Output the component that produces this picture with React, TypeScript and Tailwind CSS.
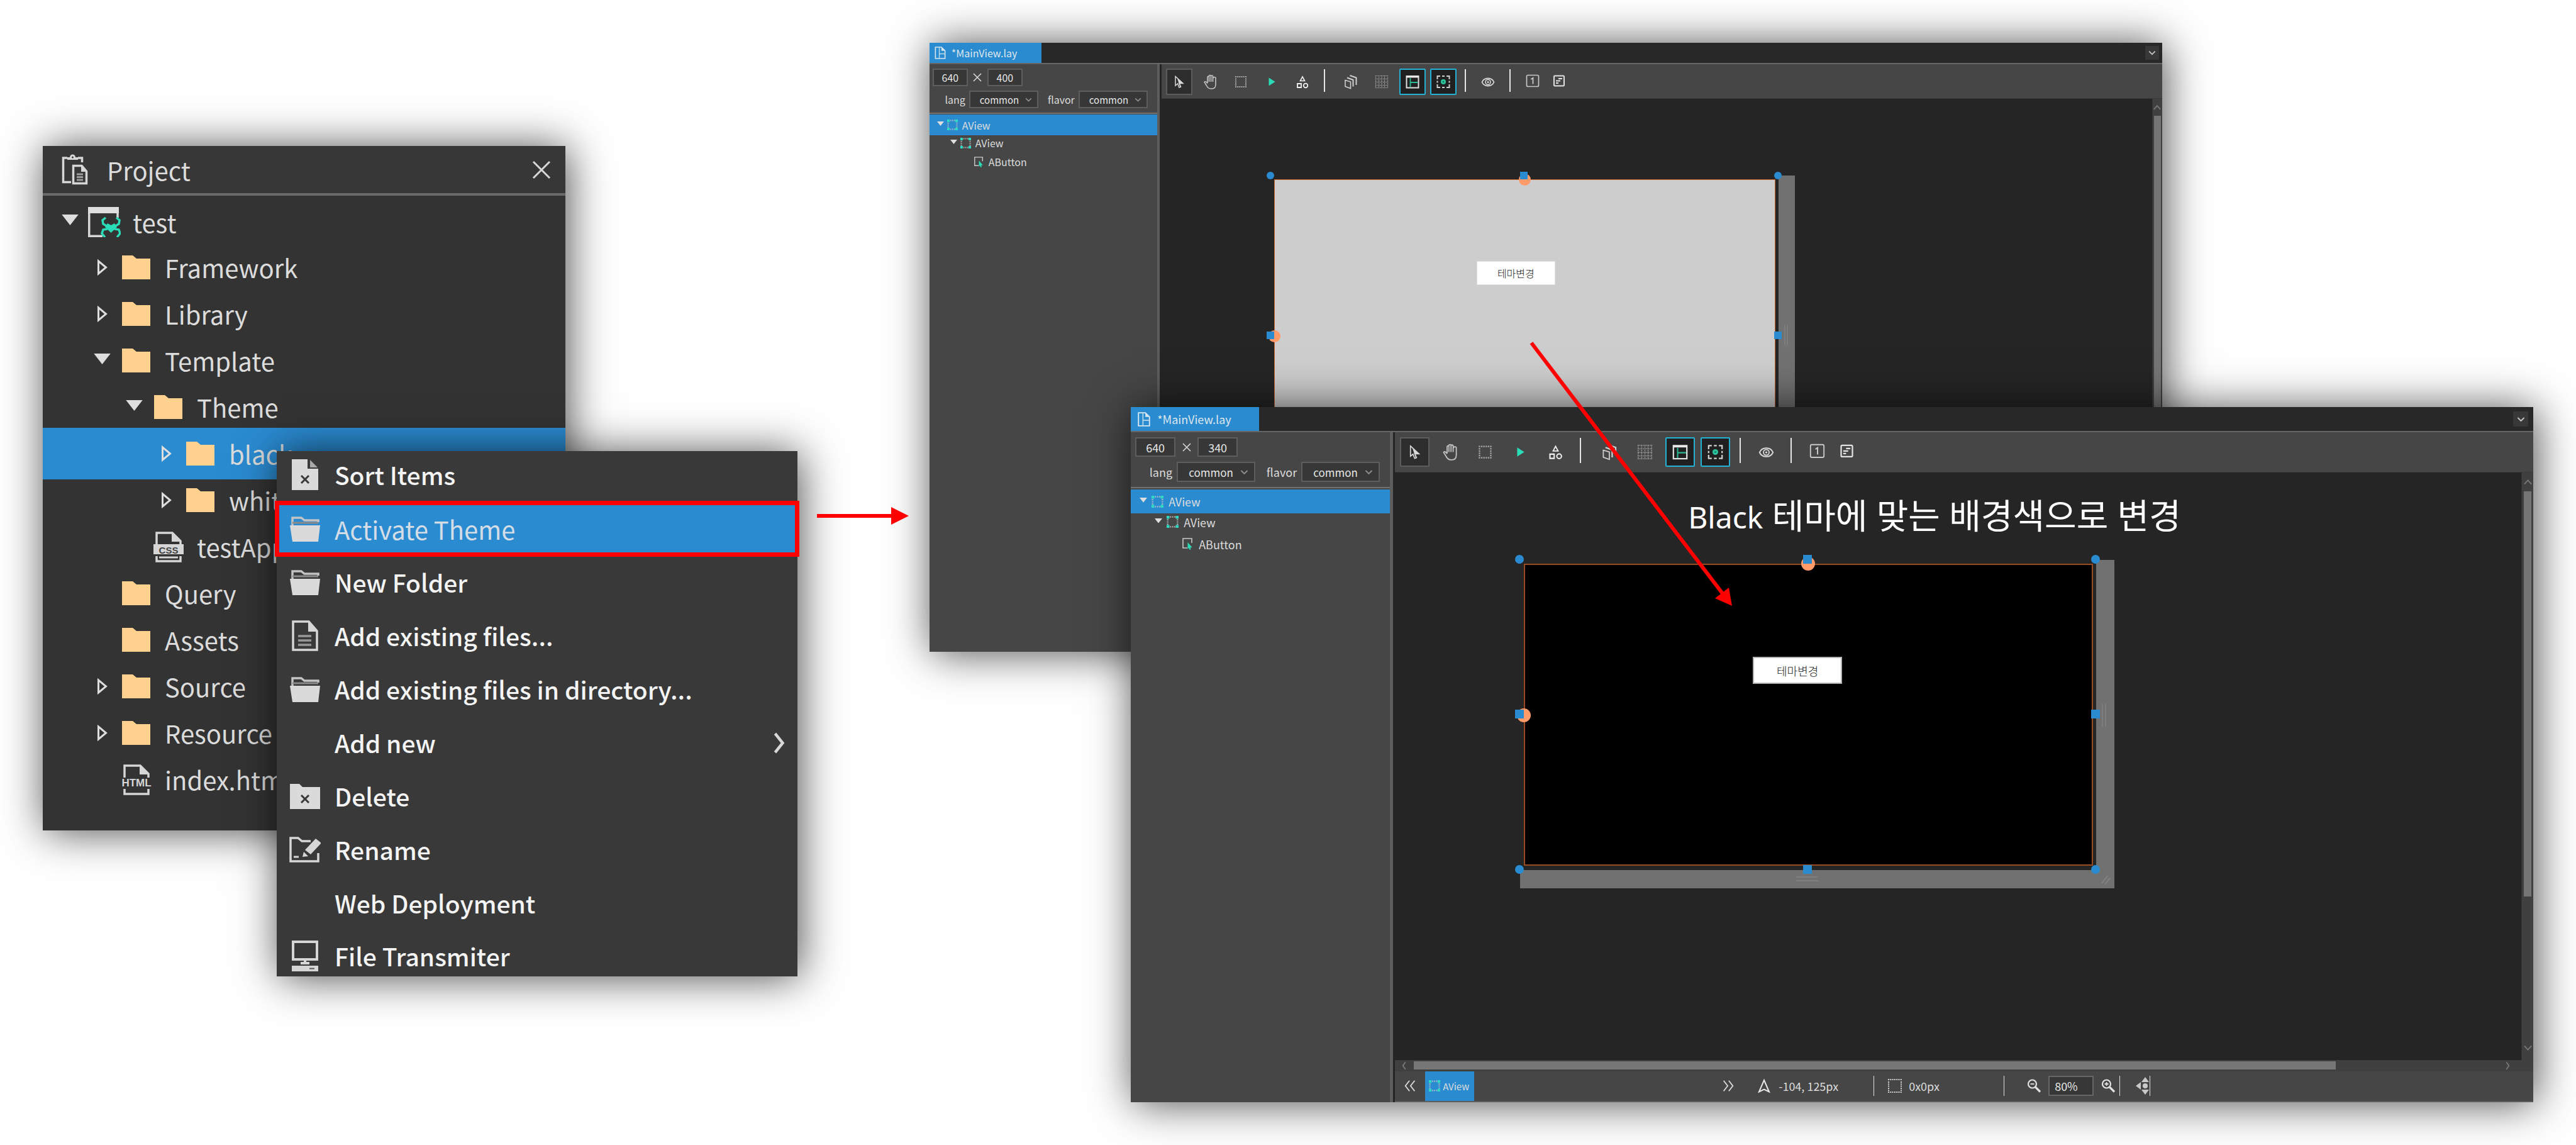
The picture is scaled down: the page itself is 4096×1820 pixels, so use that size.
import React from "react";

/* ---------------------------------------------------------------- icons */

type IconProps = { className?: string };

function Svg({ className, box = "0 0 24 24", children }: IconProps & { box?: string; children: React.ReactNode }) {
  return (
    <svg viewBox={box} className={className} fill="none" stroke="currentColor" strokeWidth="2" aria-hidden="true">
      {children}
    </svg>
  );
}

const ClipboardIcon = () => (
  <Svg box="0 0 42 49" className="h-[49px] w-[42px] shrink-0 text-[#d6d6d6]">
    <path d="M15 44.500H2.500V6H9M26 6H32.500V13" strokeWidth="3.500" />
    <path d="M9 9V5h4a4.500 4.500 0 0 1 9 0h4v4z" fill="currentColor" stroke="none" />
    <circle cx="17.500" cy="5" r="1.500" fill="#373737" stroke="none" />
    <path d="M18.500 18.500H32l7.500 9V46.500h-21z" strokeWidth="3.500" />
    <path d="M31 18v10h9z" fill="currentColor" stroke="none" />
    <path d="M24 32h10M24 36.500h10M24 41h10" stroke="#9c9c9c" strokeWidth="3" />
  </Svg>
);

const FolderIcon = () => (
  <Svg box="0 0 45 38" className="h-[38px] w-[45px]">
    <path d="M0 0H17l6 5H45V38H0z" fill="#ffd18e" stroke="none" />
  </Svg>
);

const AppIcon = () => (
  <Svg box="0 0 52 48" className="h-[48px] w-[52px]">
    <path d="M1.750 1V46.250H23M47 10V17" stroke="#d6d6d6" strokeWidth="3.500" />
    <path d="M0 0H49V10H0z" fill="#dedede" stroke="none" />
    <g stroke="#2bdcb8" strokeWidth="3.500">
      <path d="M28 17l-5 4 1 6 7 4M45 17l5 4-1 6-7 4M31 35l-7 1-2 6 5 6M42 35l7 1 2 6-5 6" />
      <path d="M31 26l5.500 3 5.500-3 4 6-9.500 9-9.500-9z" fill="#2bdcb8" stroke="none" />
    </g>
  </Svg>
);

function LabelledFile({ label, solid }: { label: string; solid?: boolean }) {
  return (
    <Svg box="0 0 48 49" className="h-[49px] w-[48px] text-[#d6d6d6]">
      <path d="M5 21V2H30L43 15V21M5 39V47H43V39" strokeWidth="3.500" />
      <path d="M29 1V16H44z" fill="currentColor" stroke="none" />
      {solid ? <path d="M0 20H48V36H0z" fill="currentColor" stroke="none" /> : null}
      <text
        x="24"
        y="35"
        textAnchor="middle"
        fontFamily="Liberation Sans, sans-serif"
        fontWeight="700"
        fontSize={solid ? 15 : 17}
        fill={solid ? "#444444" : "#d6d6d6"}
        stroke="none"
      >
        {label}
      </text>
      {solid ? <path d="M9 41H39" strokeWidth="3" /> : null}
    </Svg>
  );
}

const FileXIcon = () => (
  <Svg box="0 0 42 49" className="h-[49px] w-[42px]">
    <path d="M0 0H25V15H42V49H0z" fill="#dadada" stroke="none" />
    <path d="M29 1l12 12H29z" fill="#a9a9a9" stroke="none" />
    <path d="M15 26l12 12M27 26l-12 12" stroke="#393939" strokeWidth="3" />
  </Svg>
);

const OpenFolderIcon = () => (
  <Svg box="0 0 48 40" className="h-[40px] w-[48px] text-[#dadada]">
    <path d="M4 14V2H18L23 6H45V9" strokeWidth="3.500" stroke="#c4c4c4" />
    <path d="M0 14H48L45 40H4z" fill="currentColor" stroke="none" />
    <path d="M4 10H45" stroke="#8a8a8a" strokeWidth="3" />
  </Svg>
);

const FileLinesIcon = () => (
  <Svg box="0 0 42 49" className="h-[49px] w-[42px] text-[#d6d6d6]">
    <path d="M2 2H27L40 17V47H2z" strokeWidth="3.500" />
    <path d="M26 1V18H41z" fill="currentColor" stroke="none" />
    <path d="M10 25H31M10 32H31M10 39H31" stroke="#989898" strokeWidth="3.500" />
  </Svg>
);

const FolderXIcon = () => (
  <Svg box="0 0 48 40" className="h-[40px] w-[48px]">
    <path d="M0 0H15l5 5H48V40H0z" fill="#dadada" stroke="none" />
    <path d="M18 18l12 12M30 18l-12 12" stroke="#393939" strokeWidth="3" />
  </Svg>
);

const RenameIcon = () => (
  <Svg box="0 0 50 41" className="h-[41px] w-[50px] text-[#d6d6d6]">
    <path d="M46 26V39H2V2H14L20 7H34" strokeWidth="3.500" />
    <path d="M42 3l9 7-17 18-9-7z" fill="currentColor" stroke="none" />
    <path d="M23 24l7 7-9 1z" fill="currentColor" stroke="none" />
    <path d="M7 32H15" strokeWidth="3" />
  </Svg>
);

const MonitorIcon = () => (
  <Svg box="0 0 42 49" className="h-[49px] w-[42px] text-[#d6d6d6]">
    <path d="M2 2H40V30H2z" strokeWidth="4" />
    <path d="M21 31V36M14 36H28" strokeWidth="4" />
    <path d="M0 40H42V49H0z" fill="currentColor" stroke="none" />
    <path d="M28 44.500H36" stroke="#555555" strokeWidth="2" />
  </Svg>
);

const ViewIcon = ({ className }: IconProps) => (
  <Svg box="0 0 17 17" className={className}>
    <path d="M5 1.500H13M5 15.500H13M1.500 5V13M15.500 5V13" stroke="#b9c0c4" strokeDasharray="1.500 1.500" />
    <path d="M0 0h4v4H0zM13 0h4v4h-4zM0 13h4v4H0zM13 13h4v4h-4z" fill="#2fd9c4" stroke="none" />
  </Svg>
);

const ButtonIcon = ({ className }: IconProps) => (
  <Svg box="0 0 17 19" className={className}>
    <path d="M8 16H1V1H15V8" stroke="#c9c9c9" strokeWidth="1.600" />
    <path d="M8.500 7l7 8-3 .500 1 3-2 .500-1-3-2 1.500z" fill="#2bdcb8" stroke="none" />
  </Svg>
);

const LayoutFileIcon = ({ className }: IconProps) => (
  <Svg box="0 0 18 21" className={className}>
    <path d="M1 1H11L17 7V20H1z" stroke="#d8e6f0" strokeWidth="1.700" />
    <path d="M7.500 1V20M8 12H17" stroke="#bcd8ec" strokeWidth="1.500" />
    <path d="M11 1V7H17z" fill="#d8e6f0" stroke="none" />
  </Svg>
);

const DownTriangle = ({ className }: IconProps) => (
  <Svg box="0 0 28 18" className={className}>
    <path d="M0 0H28L14 18z" fill="#dedede" stroke="none" />
  </Svg>
);

const RightTriangle = () => (
  <Svg box="0 0 18 28" className="h-[28px] w-[18px]">
    <path d="M2.500 4V24L14.500 14z" stroke="#dedede" strokeWidth="3" />
  </Svg>
);

const Chevron = ({ className, d = "M4 8l8 8 8-8" }: IconProps & { d?: string }) => (
  <Svg className={className}>
    <path d={d} strokeWidth="3" />
  </Svg>
);

const CursorIcon = ({ className }: IconProps) => (
  <Svg className={className}>
    <path d="M6 3.500V18l3.500-3 2.500 6 2.500-1-2.500-5.500H18z" stroke="#d8d8d8" strokeWidth="1.500" />
    <path d="M9 7l9 7.500h-5l2 5.500-1.500 .500L11 13z" fill="#d8d8d8" stroke="none" />
  </Svg>
);

const HandIcon = ({ className }: IconProps) => (
  <Svg className={className}>
    <path
      d="M8 14V4.500a1 1 0 0 1 2.500 0V12 3a1.200 1.200 0 0 1 3 0v9V3.500a1.200 1.200 0 0 1 3 0V12M17 6.500a1.500 1.500 0 0 1 4 0V16c0 4-2 7-6 7h-2c-3 0-5-2-6.500-5L3 12.500c1-2 3-1 5 2"
      stroke="#c4c4c4"
      strokeWidth="1.600"
    />
  </Svg>
);

const DashedBoxIcon = ({ className }: IconProps) => (
  <Svg className={className}>
    <path d="M3 4H21M3 20H21M4 6.500V18M20 6.500V18" stroke="#a8a8a8" strokeWidth="2" strokeDasharray="2 1.200" />
  </Svg>
);

const PlayIcon = ({ className }: IconProps) => (
  <Svg className={className}>
    <path d="M7.500 5.500L17.500 12 7.500 18.500z" fill="#2bdcb8" stroke="none" />
  </Svg>
);

const ShapesIcon = ({ className }: IconProps) => (
  <Svg className={className}>
    <path d="M12 4L15.500 10.500H8.500z" stroke="#f0f0f0" strokeWidth="1.600" />
    <path d="M4 15H10V21H4z" stroke="#f0f0f0" strokeWidth="1.800" />
    <circle cx="17" cy="18" r="3.300" stroke="#f0f0f0" strokeWidth="1.800" />
  </Svg>
);

const LayersIcon = ({ className }: IconProps) => (
  <Svg className={className}>
    <path d="M3 9.500L11.500 12V22.500L3 19.500z" stroke="#cfcfcf" strokeWidth="1.600" />
    <path d="M6 5.500L15.500 9V19.500M10.500 2L20.500 5.500V17" stroke="#cfcfcf" strokeWidth="2" />
  </Svg>
);

const GridIcon = ({ className }: IconProps) => (
  <Svg className={className}>
    <path
      d="M2 2.500H22M2 12.500H22M2 7.500H22M2 17.500H22M2 21.500H22"
      stroke="#b8b8b8"
      strokeWidth="1.200"
      strokeDasharray="1.200 1.200"
    />
    <path
      d="M2.500 2V22M7.500 2V22M12 2V22M16.500 2V22M21.500 2V22"
      stroke="#b8b8b8"
      strokeWidth="1.200"
      strokeDasharray="1.200 1.200"
    />
  </Svg>
);

const PanelIcon = ({ className }: IconProps) => (
  <Svg className={className}>
    <path d="M2.500 3H21.500V21.500H2.500z" stroke="#e0e0e0" strokeWidth="2" />
    <path d="M2 2.500H22V5.500H2z" fill="#e8e8e8" stroke="none" />
    <path d="M8.500 6V20.500M9 13H20.500" stroke="#2bb894" strokeWidth="1.800" />
  </Svg>
);

const FocusIcon = ({ className }: IconProps) => (
  <Svg className={className}>
    <path d="M2.500 8V3H7M17 3h4.500V8M21.500 16v5H17M7 21H2.500V16M10 3h4M10 21h4M2.500 10.500v3M21.500 10.500v3" stroke="#d0d0d0" />
    <circle cx="12" cy="12" r="4" fill="#2bc49c" stroke="none" />
    <circle cx="12" cy="12" r="1.200" fill="#176b58" stroke="none" />
  </Svg>
);

const EyeIcon = ({ className }: IconProps) => (
  <Svg className={className}>
    <path d="M2.500 12.500C6 4.500 18 4.500 21.500 12.500 18 20.500 6 20.500 2.500 12.500z" stroke="#d8d8d8" strokeWidth="1.800" />
    <circle cx="12" cy="12.500" r="4" stroke="#d8d8d8" strokeWidth="1.600" />
    <circle cx="12" cy="12.500" r="1.500" fill="#d8d8d8" stroke="none" />
  </Svg>
);

const OneIcon = ({ className }: IconProps) => (
  <Svg className={className}>
    <rect x="2.500" y="1.500" width="19" height="18" rx="2" stroke="#c8c8c8" strokeWidth="1.700" />
    <path d="M9.500 8L12.500 6V15.500" stroke="#c8c8c8" strokeWidth="1.800" />
  </Svg>
);

const NoteIcon = ({ className }: IconProps) => (
  <Svg className={className}>
    <rect x="4" y="2.500" width="16" height="16" rx="1.500" stroke="#e2e2e2" strokeWidth="2" />
    <path d="M11 7H17M7 10.500H14M7 14H11" stroke="#e2e2e2" strokeWidth="2" />
  </Svg>
);

const CompassIcon = () => (
  <Svg className="h-[24px] w-[24px]">
    <path d="M12 3L20 21.500 12 17.500 4 21.500z" stroke="#e8e8e8" strokeWidth="2" />
  </Svg>
);

const ZoomIcon = ({ plus }: { plus?: boolean }) => (
  <Svg className="h-[24px] w-[24px]">
    <circle cx="9.500" cy="9" r="6.500" stroke="#e2e2e2" strokeWidth="2.200" />
    <path d={plus ? "M6.500 9h6M9.500 6v6" : "M6.500 9h6"} stroke="#e2e2e2" strokeWidth="1.800" />
    <path d="M14.500 14L22 21.500" stroke="#e2e2e2" strokeWidth="3.200" />
  </Svg>
);

const MoveIcon = () => (
  <Svg box="0 0 22 28" className="h-[28px] w-[22px]">
    <g fill="#c8c8c8" stroke="none">
      <path d="M15 0l6 8H9zM15 28l6-8H9zM0 14l8-6v12z" />
      <circle cx="15" cy="14" r="4" />
    </g>
  </Svg>
);

/* ------------------------------------------------------- project panel */

type Node = { label: string; level: number; arrow?: "open" | "closed"; icon: React.ReactNode; selected?: boolean };

const tree: Node[] = [
  { label: "test", level: 0, arrow: "open", icon: <AppIcon /> },
  { label: "Framework", level: 1, arrow: "closed", icon: <FolderIcon /> },
  { label: "Library", level: 1, arrow: "closed", icon: <FolderIcon /> },
  { label: "Template", level: 1, arrow: "open", icon: <FolderIcon /> },
  { label: "Theme", level: 2, arrow: "open", icon: <FolderIcon /> },
  { label: "black", level: 3, arrow: "closed", icon: <FolderIcon />, selected: true },
  { label: "white", level: 3, arrow: "closed", icon: <FolderIcon /> },
  { label: "testApp.css", level: 2, icon: <LabelledFile label="CSS" solid /> },
  { label: "Query", level: 1, icon: <FolderIcon /> },
  { label: "Assets", level: 1, icon: <FolderIcon /> },
  { label: "Source", level: 1, arrow: "closed", icon: <FolderIcon /> },
  { label: "Resource", level: 1, arrow: "closed", icon: <FolderIcon /> },
  { label: "index.html", level: 1, icon: <LabelledFile label="HTML" /> },
];

const treeIndent = ["pl-[24px]", "pl-[75px]", "pl-[126px]", "pl-[177px]"];

function ProjectPanel() {
  return (
    <section className="absolute left-[1.66%] top-[12.75%] w-[20.29%] bg-[#333333] pb-[44px] text-[40px] leading-none text-[#dcdcdc] shadow-[4px_2px_64px_rgba(0,0,0,0.7)]">
      <header className="flex h-[79px] items-center border-b-4 border-[#6a6a6a] bg-[#373737] pl-[30px] pr-[23px]">
        <ClipboardIcon />
        <h2 className="ml-[30px] flex-1">Project</h2>
        <button aria-label="Close" className="text-[#d8d8d8]">
          <Svg box="0 0 30 30" className="h-[30px] w-[30px]">
            <path d="M2 2L28 28M28 2L2 28" strokeWidth="3" />
          </Svg>
        </button>
      </header>
      <ul className="pt-[6px]">
        {tree.map((node, i) => (
          <li
            key={node.label}
            className={`flex items-center ${treeIndent[node.level]} ${i === 0 ? "h-[71px]" : ""} ${
              node.selected ? "-my-1 h-[82px] bg-[#2a8bd1]" : i > 0 ? "h-[74px]" : ""
            }`}
          >
            <span className="flex w-[40px] justify-center">
              {node.arrow === "open" ? <DownTriangle className="mb-[6px] h-[17px] w-[27px]" /> : null}
              {node.arrow === "closed" ? <RightTriangle /> : null}
            </span>
            <span className="ml-[7px] flex w-[54px] justify-center">{node.icon}</span>
            <span className="ml-[18px]">{node.label}</span>
          </li>
        ))}
      </ul>
    </section>
  );
}

/* -------------------------------------------------------- context menu */

const menu: { label: string; icon?: React.ReactNode; active?: boolean; submenu?: boolean }[] = [
  { label: "Sort Items", icon: <FileXIcon /> },
  { label: "Activate Theme", icon: <OpenFolderIcon />, active: true },
  { label: "New Folder", icon: <OpenFolderIcon /> },
  { label: "Add existing files...", icon: <FileLinesIcon /> },
  { label: "Add existing files in directory...", icon: <OpenFolderIcon /> },
  { label: "Add new", submenu: true },
  { label: "Delete", icon: <FolderXIcon /> },
  { label: "Rename", icon: <RenameIcon /> },
  { label: "Web Deployment" },
  { label: "File Transmiter", icon: <MonitorIcon /> },
];

function ContextMenu() {
  const last = menu.length - 1;
  return (
    <ul
      role="menu"
      className="absolute left-[10.74%] top-[39.4%] w-[20.22%] bg-[#393939] leading-none shadow-[4px_2px_64px_rgba(0,0,0,0.7)]"
    >
      {menu.map((item, i) => (
        <li key={item.label} role="none" className="relative">
          <button
            role="menuitem"
            className={`flex w-full items-center pl-[18px] pr-[13px] text-left ${
              i === 0 ? "h-[81px] pb-[6px]" : i === last ? "h-[74px] pt-[8px]" : "h-[85px]"
            } ${item.active ? "bg-[#2a8bd1] text-[40px] text-[#d4dde6]" : "text-[39px] font-medium text-[#f4f4f4]"}`}
          >
            <span className="flex w-[54px] justify-center">{item.icon}</span>
            <span className="ml-[20px] flex-1">{item.label}</span>
            {item.submenu ? <Chevron className="h-[36px] w-[36px] text-[#d8d8d8]" d="M9 2l8 10-8 10" /> : null}
          </button>
          {item.active ? <span className="pointer-events-none absolute -inset-x-[3px] -inset-y-[2px] border-[7px] border-[#ff0000]" /> : null}
        </li>
      ))}
    </ul>
  );
}

/* -------------------------------------------------------------- editor */

const small = {
  tabBar: "h-[34px]",
  tab: "w-[178px] gap-[9px] pl-[8px] text-[16px]",
  tabIcon: "h-[20px] w-[18px]",
  tabMenu: "mr-[5px] size-[22px]",
  tabChevron: "size-[14px]",
  side: "w-[362px] text-[16px]",
  divider: "w-[4px]",
  form: "gap-[7px] py-[7px] pl-[5px]",
  field: "h-[28px] w-[56px] text-[16px]",
  times: "w-[31px] text-[20px]",
  lang: "w-[58px] pr-[6px]",
  flavor: "w-[64px] pr-[6px]",
  select: "h-[28px] w-[110px] pl-[15px] text-[15px]",
  selectChevron: "right-[9px] size-[13px]",
  firstRow: "mb-[-3px] mt-[1px] h-[33px]",
  row: "h-[30px]",
  indent: ["pl-[12px]", "pl-[33px]", "pl-[54px]"],
  triangle: "w-[11px] mr-[5px]",
  nodeIcon: "size-[17px] mr-[7px]",
  toolbar: "h-[55px] gap-[7px] pl-[7px] pt-[7px]",
  tool: "size-[42px]",
  toolIcon: "size-[24px]",
  wideGap: "w-[21px]",
  narrowGap: "w-[15px]",
  line: "h-[36px]",
  pull: "-ml-[7px]",
  scroll: "w-[16px] px-[2px]",
  scrollHead: "h-[27px]",
  scrollIcon: "size-[14px]",
};

const large: typeof small = {
  tabBar: "h-[40px]",
  tab: "w-[204px] gap-[11px] pl-[11px] text-[18px]",
  tabIcon: "h-[23px] w-[20px]",
  tabMenu: "mr-[8px] size-[24px]",
  tabChevron: "size-[15px]",
  side: "w-[412px] text-[18px]",
  divider: "w-[5px]",
  form: "gap-[8px] py-[8px] pl-[7px]",
  field: "h-[31px] w-[64px] text-[18px]",
  times: "w-[35px] text-[23px]",
  lang: "w-[66px] pr-[7px]",
  flavor: "w-[73px] pr-[7px]",
  select: "h-[32px] w-[125px] pl-[17px] text-[17px]",
  selectChevron: "right-[10px] size-[15px]",
  firstRow: "mb-[-4px] mt-[2px] h-[38px]",
  row: "h-[35px]",
  indent: ["pl-[14px]", "pl-[38px]", "pl-[62px]"],
  triangle: "w-[12px] mr-[7px]",
  nodeIcon: "size-[19px] mr-[8px]",
  toolbar: "h-[64px] gap-[9px] pl-[8px] pt-[8px]",
  tool: "size-[47px]",
  toolIcon: "size-[27px]",
  wideGap: "w-[21px]",
  narrowGap: "w-[16px]",
  line: "h-[40px]",
  pull: "-ml-[9px]",
  scroll: "w-[19px] px-[3px]",
  scrollHead: "h-[30px]",
  scrollIcon: "size-[15px]",
};

type Sizes = typeof small;

type Tool = { name: string; icon: React.FC<IconProps>; state?: "pressed" | "on"; pull?: boolean } | "wide" | "narrow";

const tools: Tool[] = [
  { name: "Select", icon: CursorIcon, state: "pressed" },
  { name: "Pan", icon: HandIcon },
  { name: "Area", icon: DashedBoxIcon },
  { name: "Run", icon: PlayIcon },
  { name: "Shapes", icon: ShapesIcon },
  "wide",
  { name: "Layers", icon: LayersIcon },
  { name: "Grid", icon: GridIcon },
  { name: "Layout guides", icon: PanelIcon, state: "on" },
  { name: "Snap", icon: FocusIcon, state: "on" },
  "narrow",
  { name: "Preview", icon: EyeIcon },
  "narrow",
  { name: "Actual size", icon: OneIcon },
  { name: "Notes", icon: NoteIcon, pull: true },
];

function Toolbar({ s }: { s: Sizes }) {
  return (
    <div role="toolbar" className={`flex shrink-0 items-start border-b border-[#3a3a3a] bg-[#464646] ${s.toolbar}`}>
      {tools.map((tool, i) => {
        if (typeof tool === "string") {
          return (
            <span key={i} className={`mt-px flex pl-[6px] ${tool === "wide" ? s.wideGap : s.narrowGap}`}>
              <span className={`w-[2px] bg-[#e6e6e6] ${s.line}`} />
            </span>
          );
        }
        const look =
          tool.state === "pressed"
            ? "border-2 border-[#5c5c5c] bg-[#2d2d2d]"
            : tool.state === "on"
              ? "rounded-[2px] border-2 border-[#22b2d6] bg-[#202020]"
              : "";
        return (
          <button
            key={i}
            aria-label={tool.name}
            className={`flex shrink-0 items-center justify-center ${s.tool} ${look} ${tool.pull ? s.pull : ""}`}
          >
            <tool.icon className={s.toolIcon} />
          </button>
        );
      })}
    </div>
  );
}

function Picker({ s, id, label, width }: { s: Sizes; id: string; label: string; width: string }) {
  return (
    <>
      <label htmlFor={id} className={`text-right ${width}`}>
        {label}
      </label>
      <span className="relative flex">
        <select id={id} className={`appearance-none border-2 border-[#5e5e5e] bg-[#373737] text-[#e6e6e6] ${s.select}`}>
          <option>common</option>
        </select>
        <Chevron className={`pointer-events-none absolute inset-y-0 my-auto text-[#8e8e8e] ${s.selectChevron}`} />
      </span>
    </>
  );
}

function SidePanel({ s, id, height }: { s: Sizes; id: string; height: string }) {
  const field = `border-2 border-[#5e5e5e] bg-[#373737] text-center text-[#e6e6e6] ${s.field}`;
  return (
    <aside className={`shrink-0 bg-[#464646] leading-none text-[#dcdcdc] ${s.side}`}>
      <form className={`flex flex-col border-b-2 border-[#737373] ${s.form}`}>
        <div className="flex items-center">
          <input aria-label="Width" className={field} defaultValue="640" />
          <span className={`flex justify-center text-[#d8d8d8] ${s.times}`}>
            <Svg box="0 0 14 14" className="size-[14px]">
              <path d="M1 1L13 13M13 1L1 13" strokeWidth="1.600" />
            </Svg>
          </span>
          <input aria-label="Height" className={field} defaultValue={height} />
        </div>
        <div className="flex items-center">
          <Picker s={s} id={`${id}-lang`} label="lang" width={s.lang} />
          <Picker s={s} id={`${id}-flavor`} label="flavor" width={s.flavor} />
        </div>
      </form>
      <ul>
        {["AView", "AView", "AButton"].map((label, i) => (
          <li
            key={i}
            className={`flex items-center ${s.indent[i]} ${i === 0 ? `bg-[#2a8bd1] ${s.firstRow}` : s.row}`}
          >
            <span className={`flex pb-1 ${s.triangle}`}>{i < 2 ? <DownTriangle className="w-full" /> : null}</span>
            {i < 2 ? <ViewIcon className={s.nodeIcon} /> : <ButtonIcon className={s.nodeIcon} />}
            <span>{label}</span>
          </li>
        ))}
      </ul>
    </aside>
  );
}

function StatusBar() {
  const line = "h-[32px] w-px shrink-0 bg-[#e0e0e0]";
  return (
    <div className="shrink-0">
      <div className="flex h-[18px] items-center bg-[#404040] text-[#7a7a7a]">
        <Chevron className="mx-[8px] size-[14px]" d="M15 2L8 12l7 10" />
        <div className="h-[13px] w-[81%] bg-[#777777]" />
        <span className="flex-1" />
        <Chevron className="mr-[34px] size-[14px]" d="M9 2l7 10-7 10" />
      </div>
      <div className="flex h-[49px] items-center border-b-2 border-[#5d5d5d] bg-[#464646] text-[18px] leading-none text-[#dcdcdc]">
        <div className="flex h-full w-[546px] items-center">
          <button aria-label="Previous" className="flex w-[48px] justify-center">
            <Svg className="size-[22px]">
              <path d="M11 3L4 12l7 9M20 3l-7 9 7 9" />
            </Svg>
          </button>
          <button className="flex h-full w-[78px] items-center gap-[4px] bg-[#2a8bd1] pl-[6px] text-[15px]">
            <ViewIcon className="size-[18px]" />
            AView
          </button>
          <span className="flex-1" />
          <button aria-label="Next" className="flex w-[32px] justify-center">
            <Svg className="size-[22px]">
              <path d="M4 3l7 9-7 9M13 3l7 9-7 9" />
            </Svg>
          </button>
        </div>
        <div className="flex w-[215px] items-center gap-[11px] pl-[29px]">
          <CompassIcon />
          <span className="whitespace-nowrap">-104, 125px</span>
        </div>
        <span className={line} />
        <div className="flex w-[206px] items-center gap-[10px] pl-[21px]">
          <Svg className="size-[24px]">
            <path d="M1 2H23M1 22H23M2 5V20M22 5V20" strokeWidth="2" strokeDasharray="2 1.300" stroke="#d0d0d0" />
          </Svg>
          <span>0x0px</span>
        </div>
        <span className={line} />
        <div className="flex w-[183px] items-center gap-[11px] pl-[35px]">
          <button aria-label="Zoom out">
            <ZoomIcon />
          </button>
          <input
            aria-label="Zoom"
            className="h-[32px] w-[72px] border-2 border-[#666666] bg-[#373737] pl-[8px] text-[#e6e6e6]"
            defaultValue="80%"
          />
          <button aria-label="Zoom in">
            <ZoomIcon plus />
          </button>
        </div>
        <span className={line} />
        <button aria-label="Fit" className="ml-[25px]">
          <MoveIcon />
        </button>
        <span className={line} />
      </div>
    </div>
  );
}

function Handle({ className }: IconProps) {
  return <span className={`absolute bg-[#2a8bd1] ${className}`} />;
}

function SmallCanvas() {
  return (
    <div className="absolute left-[173px] top-[122px] h-[508px] w-[807px]">
      <div className="absolute left-[808px] top-0 h-[534px] w-[26px] bg-[#717171]">
        <span className="absolute left-[9px] top-[238px] h-[32px] w-[6px] border-x-2 border-[#7e7e7e]" />
      </div>
      <div className="absolute bottom-[6px] left-[6px] right-[4px] top-[6px] border border-[#c8652f] bg-[#cdcdcd]" />
      <span className="absolute left-[395px] top-[-3px] size-[19px] rounded-full bg-[#ff9a69]" />
      <span className="absolute left-[-3px] top-[246px] size-[19px] rounded-full bg-[#ff9a69]" />
      <button className="absolute left-[328px] top-[136px] h-[38px] w-[125px] border border-[#e2e2e2] bg-white text-[16px] font-light leading-none text-[#222222]">
        테마변경
      </button>
      <Handle className="left-[-6px] top-[-6px] size-[12px] rounded-full" />
      <Handle className="right-[-6px] top-[-6px] size-[12px] rounded-full" />
      <Handle className="left-[397px] top-[-6px] size-[12px]" />
      <Handle className="left-[-6px] top-[248px] size-[12px]" />
      <Handle className="right-[-6px] top-[248px] size-[12px]" />
    </div>
  );
}

function LargeCanvas() {
  return (
    <div className="absolute left-[198px] top-[138px] h-[493px] w-[916px]">
      <div className="absolute left-[917px] top-px h-[522px] w-[29px] bg-[#717171]">
        <span className="absolute left-[9px] top-[229px] h-[36px] w-[7px] border-x-2 border-[#7e7e7e]" />
      </div>
      <div className="absolute left-px top-[494px] h-[29px] w-[945px] bg-[#717171]">
        <span className="absolute left-[439px] top-[10px] h-[8px] w-[35px] border-y-2 border-[#7e7e7e]" />
        <Svg box="0 0 16 16" className="absolute right-[6px] top-[8px] size-[15px] text-[#838383]">
          <path d="M1 14L11 1M7 15L15 5" />
        </Svg>
      </div>
      <div className="absolute bottom-[6px] left-[7px] right-[4px] top-[7px] border-2 border-[#9a4a20] bg-black" />
      <span className="absolute left-[448px] top-[-4px] size-[22px] rounded-full bg-[#ff9a69]" />
      <span className="absolute left-[-4px] top-[237px] size-[22px] rounded-full bg-[#ff9a69]" />
      <button className="absolute left-[371px] top-[155px] h-[43px] w-[142px] border-2 border-[#b4b4b4] bg-white text-[18px] font-light leading-none text-[#222222]">
        테마변경
      </button>
      <Handle className="left-[-7px] top-[-7px] size-[14px] rounded-full" />
      <Handle className="right-[-7px] top-[-7px] size-[14px] rounded-full" />
      <Handle className="bottom-[-7px] left-[-7px] size-[14px] rounded-full" />
      <Handle className="bottom-[-7px] right-[-7px] size-[14px] rounded-full" />
      <Handle className="left-[451px] top-[-7px] size-[14px]" />
      <Handle className="bottom-[-7px] left-[451px] size-[14px]" />
      <Handle className="left-[-7px] top-[239px] size-[14px]" />
      <Handle className="right-[-7px] top-[239px] size-[14px]" />
    </div>
  );
}

function Editor({
  s,
  id,
  height,
  place,
  status,
  children,
}: {
  s: Sizes;
  id: string;
  height: string;
  place: string;
  status?: boolean;
  children: React.ReactNode;
}) {
  return (
    <section className={`absolute flex flex-col bg-[#464646] shadow-[4px_2px_64px_rgba(0,0,0,0.7)] ${place}`}>
      <header className={`flex shrink-0 items-center justify-between border-b-2 border-[#666666] bg-[#282828] ${s.tabBar}`}>
        <button className={`flex h-full items-center bg-[#2a8bd1] leading-none text-[#dfe6ec] ${s.tab}`}>
          <LayoutFileIcon className={s.tabIcon} />
          *MainView.lay
        </button>
        <button aria-label="Open tabs" className={`flex items-center justify-center bg-[#383838] text-[#c8c8c8] ${s.tabMenu}`}>
          <Chevron className={s.tabChevron} />
        </button>
      </header>
      <div className="flex min-h-0 flex-1">
        <SidePanel s={s} id={id} height={height} />
        <div className={`shrink-0 bg-[#5d5d5d] ${s.divider}`} />
        <div className="w-[3px] shrink-0 bg-[#252525]" />
        <div className="flex min-w-0 flex-1 flex-col">
          <Toolbar s={s} />
          <div className="flex min-h-0 flex-1">
            <div className="relative min-w-0 flex-1 overflow-hidden bg-[#252525]">{children}</div>
            <div className={`flex flex-col items-center border-l border-[#343434] bg-[#404040] text-[#777777] ${s.scroll}`}>
              <span className={`flex items-center ${s.scrollHead}`}>
                <Chevron className={s.scrollIcon} d="M3 17l9-10 9 10" />
              </span>
              <span className={`w-full bg-[#757575] ${status ? "h-[69%]" : "flex-1"}`} />
              {status ? (
                <span className="mt-auto flex pb-[12px]">
                  <Chevron className={s.scrollIcon} d="M3 7l9 10 9-10" />
                </span>
              ) : null}
            </div>
          </div>
          {status ? <StatusBar /> : null}
        </div>
      </div>
    </section>
  );
}

/* ---------------------------------------------------------------- page */

export default function App() {
  return (
    <main className="relative min-h-screen overflow-hidden bg-white font-['Noto_Sans_CJK_KR',sans-serif]">
      <ProjectPanel />
      <ContextMenu />
      <Editor s={small} id="first" height="400" place="left-[36.08%] top-[3.74%] h-[53.2%] w-[47.85%]">
        <SmallCanvas />
      </Editor>
      <Editor s={large} id="second" height="340" status place="left-[43.9%] top-[35.55%] h-[60.7%] w-[54.44%]">
        <p className="absolute left-[466px] top-[36px] whitespace-nowrap font-['Noto_Sans','Noto_Sans_CJK_KR',sans-serif] text-[55px] leading-[64px] text-white">
          <span className="text-[48px]">Black</span> 테마에 맞는 배경색으로 변경
        </p>
        <LargeCanvas />
      </Editor>
      <svg viewBox="0 0 4096 1820" className="pointer-events-none absolute inset-x-0 top-0 w-full" aria-hidden="true">
        <g stroke="#ff0000" strokeWidth="6">
          <path d="M1299 820H1422" />
          <path d="M2435 545L2741 946" />
        </g>
        <path d="M1417 806L1445 820L1417 834z" fill="#ff0000" />
        <path d="M2727 951L2749 934L2754 963z" fill="#ff0000" />
      </svg>
    </main>
  );
}
